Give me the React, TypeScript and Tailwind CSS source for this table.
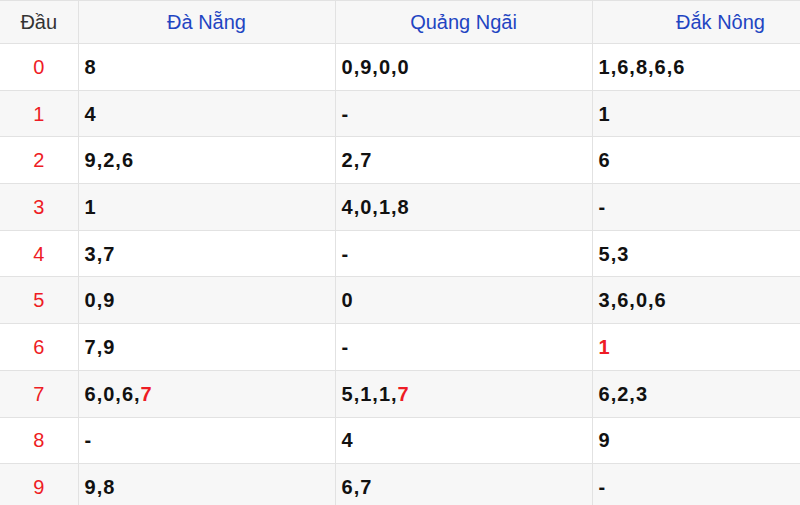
type Cell = { nums: string[]; hot?: number[] };

const heads = ["Đà Nẵng", "Quảng Ngãi", "Đắk Nông"];

const rows: Cell[][] = [
  [{ nums: ["8"] }, { nums: ["0", "9", "0", "0"] }, { nums: ["1", "6", "8", "6", "6"] }],
  [{ nums: ["4"] }, { nums: [] }, { nums: ["1"] }],
  [{ nums: ["9", "2", "6"] }, { nums: ["2", "7"] }, { nums: ["6"] }],
  [{ nums: ["1"] }, { nums: ["4", "0", "1", "8"] }, { nums: [] }],
  [{ nums: ["3", "7"] }, { nums: [] }, { nums: ["5", "3"] }],
  [{ nums: ["0", "9"] }, { nums: ["0"] }, { nums: ["3", "6", "0", "6"] }],
  [{ nums: ["7", "9"] }, { nums: [] }, { nums: ["1"], hot: [0] }],
  [{ nums: ["6", "0", "6", "7"], hot: [3] }, { nums: ["5", "1", "1", "7"], hot: [3] }, { nums: ["6", "2", "3"] }],
  [{ nums: [] }, { nums: ["4"] }, { nums: ["9"] }],
  [{ nums: ["9", "8"] }, { nums: ["6", "7"] }, { nums: [] }],
];

function Nums({ cell }: { cell: Cell }) {
  if (cell.nums.length === 0) return <span>-</span>;
  return (
    <>
      {cell.nums.map((n, i) => (
        <span key={i}>
          <span className={cell.hot?.includes(i) ? "text-[#ee1c25]" : ""}>{n}</span>
          {i < cell.nums.length - 1 && ","}
        </span>
      ))}
    </>
  );
}

export default function App() {
  return (
    <div className="w-[800px] h-[505px] overflow-hidden bg-white font-['Liberation_Sans',Arial,sans-serif]">
      <table className="w-[849px] border-collapse table-fixed border-t border-[#e2e2e2]">
        <colgroup>
          <col className="w-[78px]" />
          <col className="w-[257px]" />
          <col className="w-[257px]" />
          <col className="w-[257px]" />
        </colgroup>
        <thead>
          <tr className="h-[43px] bg-[#f7f7f7]">
            <th className="border-b border-r border-[#e2e2e2] text-center text-[20px] font-normal text-[#333]">
              Đầu
            </th>
            {heads.map((h) => (
              <th
                key={h}
                className="border-b border-r border-[#e2e2e2] text-center text-[20px] font-normal text-[#1f45c2]"
              >
                {h}
              </th>
            ))}
          </tr>
        </thead>
        <tbody>
          {rows.map((r, i) => (
            <tr key={i} className={`h-[46.7px] ${i % 2 === 1 ? "bg-[#f7f7f7]" : "bg-white"}`}>
              <td className="border-b border-r border-[#e2e2e2] text-center text-[20px] text-[#ee1c25]">
                {i}
              </td>
              {r.map((c, j) => (
                <td
                  key={j}
                  className="border-b border-r border-[#e2e2e2] pl-[6px] text-[20px] font-bold tracking-[1px] text-[#111]"
                >
                  <Nums cell={c} />
                </td>
              ))}
            </tr>
          ))}
        </tbody>
      </table>
    </div>
  );
}
